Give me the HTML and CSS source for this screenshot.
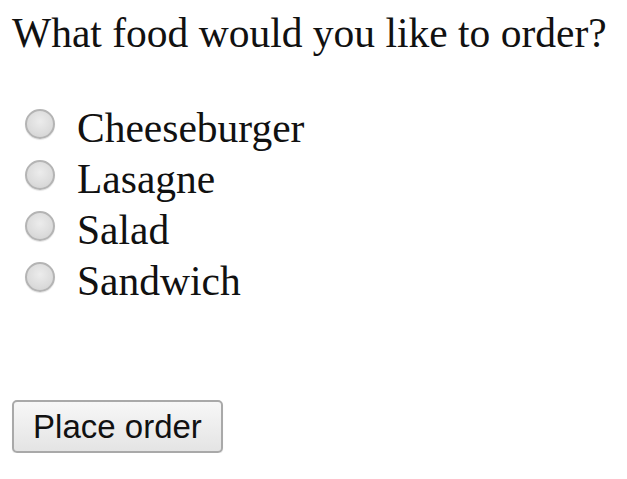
FILE: index.html
```html
<!DOCTYPE html>
<html>
<head>
<meta charset="utf-8">
<link rel="stylesheet" href="styles.css">
</head>
<body>
<form class="order">
  <p class="question">What food would you like to order?</p>
  <div class="options">
    <label class="option"><span class="radio"></span><span class="label-text">Cheeseburger</span></label>
    <label class="option"><span class="radio"></span><span class="label-text">Lasagne</span></label>
    <label class="option"><span class="radio"></span><span class="label-text">Salad</span></label>
    <label class="option"><span class="radio"></span><span class="label-text">Sandwich</span></label>
  </div>
  <button type="button" class="submit">Place order</button>
</form>
</body>
</html>
```
FILE: styles.css
```css
html, body {
  margin: 0;
  padding: 0;
  background: #ffffff;
}
.order {
  display: flex;
  flex-direction: column;
  align-items: flex-start;
  padding: 10px 0 0 12px;
  font-family: "Liberation Serif", "Times New Roman", serif;
  color: #111;
}
.question {
  margin: 0;
  font-size: 41.5px;
  line-height: 46px;
}
.options {
  display: flex;
  flex-direction: column;
  margin-top: 47px;
  padding-left: 13px;
}
.option {
  display: flex;
  align-items: flex-start;
  gap: 22px;
  height: 51px;
  font-size: 41.5px;
  line-height: 51px;
}
.radio {
  width: 30px;
  height: 30px;
  margin-top: 6px;
  box-sizing: border-box;
  border-radius: 50%;
  border: 2px solid #b4b4b4;
  background: radial-gradient(circle at 50% 40%, #ececec 0%, #dcdcdc 60%, #cfcfcf 100%);
  box-shadow: 0 1px 1px rgba(0,0,0,0.12);
  flex: none;
}
.submit {
  margin-top: 93px;
  width: 211px;
  height: 53px;
  padding: 0;
  font-family: "Liberation Sans", Arial, sans-serif;
  font-size: 33px;
  color: #111;
  border: 2px solid #a9a9a9;
  border-radius: 5px;
  background: linear-gradient(#f7f7f7, #e4e4e4);
  box-shadow: 0 1px 1px rgba(0,0,0,0.1);
}
```
